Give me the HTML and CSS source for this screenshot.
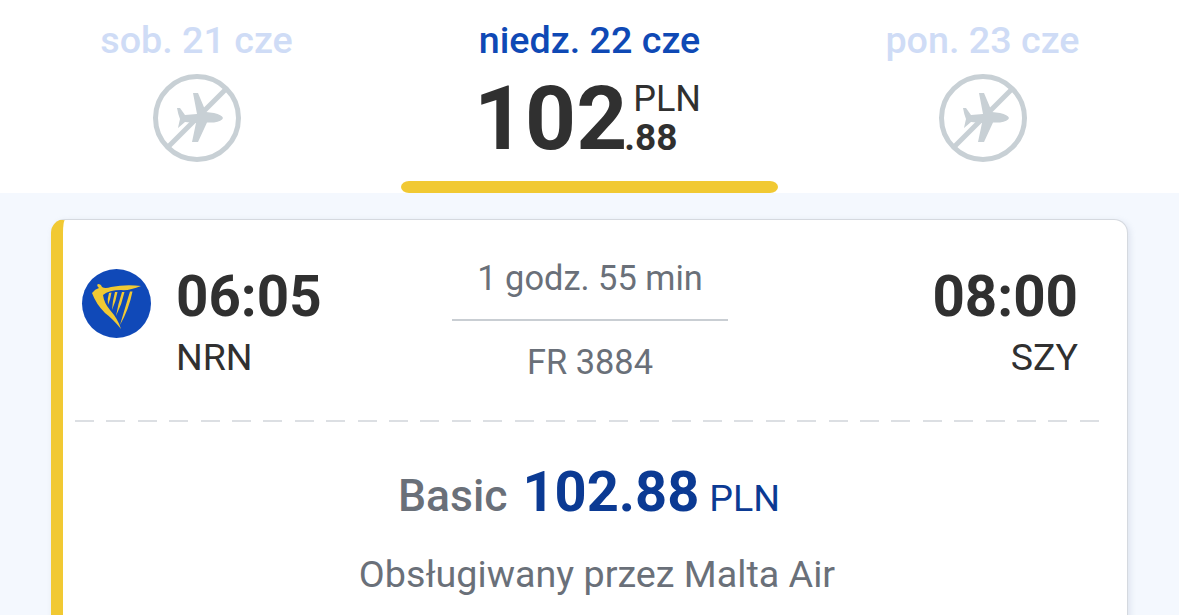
FILE: index.html
```html
<!DOCTYPE html>
<html lang="pl">
<head>
  <meta charset="UTF-8">
  <title>Ryanair - wybór lotu</title>
  <meta name="viewport" content="width=device-width, initial-scale=1.0">
  <link rel="stylesheet" href="styles.css">
</head>
<body>
  <div class="dates">
    <div class="date-col">
      <div class="date-label">sob. 21 cze</div>
      <svg class="no-flight" width="90" height="90" viewBox="0 0 90 90">
        <circle cx="45" cy="45" r="41.5" fill="none" stroke="#c8d0d5" stroke-width="5"/>
        <path d="M71 45 Q70 48 62 49.5 L55 49.5 L46 69 L40 69 L44 50 L33 49 L26 55 Q27 50 28 46 Q26 41 25 35 L28 35 L33 42 L45 41 L41 20 L46 20 L54 39 L62 40 Q70 42 71 45 Z" fill="#c8d0d5"/>
        <path d="M24 66 L56 34" stroke="#fff" stroke-width="3"/>
        <path d="M16 74 L74 16" stroke="#c8d0d5" stroke-width="5"/>
      </svg>
    </div>
    <div class="date-col active">
      <div class="date-label">niedz. 22 cze</div>
      <div class="price">
        <span class="price-main">10<span class="price-end">2</span></span>
        <span class="price-side">
          <span class="price-cur">PLN</span>
          <span class="price-dec">.88</span>
        </span>
      </div>
      <div class="date-bar"></div>
    </div>
    <div class="date-col">
      <div class="date-label">pon. 23 cze</div>
      <svg class="no-flight" width="90" height="90" viewBox="0 0 90 90">
        <circle cx="45" cy="45" r="41.5" fill="none" stroke="#c8d0d5" stroke-width="5"/>
        <path d="M71 45 Q70 48 62 49.5 L55 49.5 L46 69 L40 69 L44 50 L33 49 L26 55 Q27 50 28 46 Q26 41 25 35 L28 35 L33 42 L45 41 L41 20 L46 20 L54 39 L62 40 Q70 42 71 45 Z" fill="#c8d0d5"/>
        <path d="M24 66 L56 34" stroke="#fff" stroke-width="3"/>
        <path d="M16 74 L74 16" stroke="#c8d0d5" stroke-width="5"/>
      </svg>
    </div>
  </div>

  <div class="content">
    <div class="card">
      <div class="flight">
        <div class="leg-start">
          <svg class="logo" width="70" height="70" viewBox="0 0 70 70">
            <circle cx="35.5" cy="34.5" r="34.5" fill="#1049b8"/>
            <path d="M11 24 Q14 20 18 19 Q15 16 17 15 Q20 15 21 18 Q24 20 30 18 Q45 15 60 17 Q48 22 40 21 Q28 21 22 26 Q23 34 29 41 Q37 50 40 60 Q32 50 24 44 Q15 35 11 24 Z" fill="#f1c933"/>
            <path d="M28 24 L30.5 23.5 Q29.5 30 27 36 Q26 30 28 24 Z M34 23 L36.5 23 Q35 32 31 41 Q31.5 32 34 23 Z M41 23 L43.5 23 Q41 35 35 47 Q37 35 41 23 Z M49 22.5 L51.5 22.5 Q48 40 39 56 Q44 39 49 22.5 Z" fill="#f1c933"/>
          </svg>
          <div class="leg">
            <div class="time">06:05</div>
            <div class="airport">NRN</div>
          </div>
        </div>
        <div class="middle">
          <div class="duration">1 godz. 55 min</div>
          <div class="flight-no">FR 3884</div>
        </div>
        <div class="leg leg-end">
          <div class="time">08:00</div>
          <div class="airport">SZY</div>
        </div>
      </div>
      <div class="dashed"></div>
      <div class="fare">
        <span class="fare-name">Basic</span>
        <span class="fare-price">102.88</span>
        <span class="fare-cur">PLN</span>
      </div>
      <div class="operator">Obsługiwany przez Malta Air</div>
    </div>
  </div>
</body>
</html>
```

FILE: styles.css
```css
html, body {
  margin: 0;
  height: 615px;
  overflow: hidden;
}
body {
  font-family: Roboto, "Liberation Sans", sans-serif;
  background: #f4f8fe;
  color: #303030;
}
.dates {
  display: grid;
  grid-template-columns: 393px 393px 393px;
  height: 193px;
  background: #fff;
}
.date-col {
  display: flex;
  flex-direction: column;
  align-items: center;
}
.date-label {
  margin-top: 18px;
  font-size: 37.7px;
  line-height: 44px;
  font-weight: 500;
  color: #cfdcf6;
}
.no-flight {
  margin-top: 11px;
}
.active .date-label {
  color: #0f49b5;
}
.price {
  display: flex;
  height: 105px;
  margin: 3px 4px 0 0;
}
.price-main {
  font-size: 89px;
  line-height: 107px;
  font-weight: 700;
}
.price-end {
  letter-spacing: -3px;
}
.price-side {
  display: flex;
  flex-direction: column;
}
.price-cur {
  margin: 16px 0 0 9px;
  font-size: 36px;
  line-height: 37px;
}
.price-dec {
  margin-top: 1px;
  font-size: 37px;
  line-height: 37px;
  font-weight: 700;
}
.date-bar {
  width: 377px;
  height: 12px;
  margin-top: 11px;
  background: #f1c933;
  border-radius: 8px / 6px;
}
.content {
  padding: 26px 51px 0;
}
.card {
  height: 420px;
  background: #fff;
  border: 1px solid #d5d9df;
  border-left: 12px solid #f1c933;
  border-radius: 14px;
  box-shadow: 2px 2px 6px rgba(130, 145, 175, 0.2);
}
.flight {
  display: grid;
  grid-template-columns: 1fr 276px 1fr;
  align-items: start;
  height: 200px;
  padding: 0 28px 0 18px;
}
.leg-start {
  display: flex;
  align-items: flex-start;
}
.logo {
  margin-top: 49px;
}
.leg {
  margin-left: 25px;
  padding-top: 45px;
}
.leg-end {
  justify-self: end;
  margin-left: 0;
  padding-right: 21px;
  text-align: right;
}
.time {
  font-size: 56.5px;
  line-height: 64px;
  font-weight: 700;
}
.airport {
  margin-top: 7px;
  font-size: 37.5px;
  line-height: 42px;
}
.middle {
  margin-top: 37px;
  text-align: center;
  color: #6a7079;
}
.duration {
  padding-bottom: 20px;
  border-bottom: 2px solid #c9ced3;
  font-size: 34.4px;
  line-height: 42px;
}
.flight-no {
  margin-top: 20px;
  font-size: 34.4px;
  line-height: 42px;
}
.dashed {
  height: 2px;
  margin: 0 26px 0 12px;
  background: repeating-linear-gradient(90deg, #dcdfe3 0 19px, transparent 19px 31.4px);
}
.fare {
  display: flex;
  justify-content: center;
  align-items: baseline;
  margin-top: 35px;
  padding-right: 12px;
  line-height: 70px;
  color: #6a7079;
}
.fare-name {
  font-size: 44.5px;
  font-weight: 500;
}
.fare-price {
  margin-left: 15px;
  font-size: 56px;
  font-weight: 700;
  color: #0b3a93;
}
.fare-cur {
  margin-left: 10px;
  font-size: 37.6px;
  color: #0b3a93;
}
.operator {
  margin-top: 19px;
  padding-left: 4px;
  text-align: center;
  font-size: 37.7px;
  line-height: 44px;
  color: #6a7079;
}
```
